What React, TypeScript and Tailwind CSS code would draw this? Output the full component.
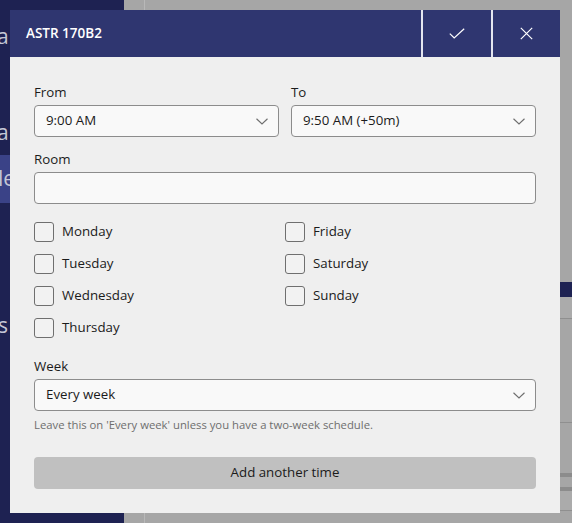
import React from "react";

const font = { fontFamily: '"Open Sans", "Noto Sans", sans-serif' };

function Chevron() {
  return (
    <svg width="12" height="7" viewBox="0 0 12 7" fill="none">
      <path d="M0.5 0.75 L6 6 L11.5 0.75" stroke="#6e6e6e" strokeWidth="1.1" />
    </svg>
  );
}

function Select({ value }: { value: string }) {
  return (
    <div className="flex h-[32px] items-center justify-between rounded-[4px] border border-[#8c8c8c] bg-[#f9f9f9] pl-[11px] pr-[10px] text-[13.3px] text-[#1b1b1b]">
      <span>{value}</span>
      <Chevron />
    </div>
  );
}

function Check({ label }: { label: string }) {
  return (
    <div className="flex h-[32px] items-center">
      <div className="h-[20px] w-[20px] rounded-[3px] border border-[#6f6f6f] bg-[#f2f2f2]" />
      <span className="ml-[8px] text-[13.3px] text-[#1b1b1b]">{label}</span>
    </div>
  );
}

export default function App() {
  return (
    <div className="relative h-[523px] w-[572px] overflow-hidden bg-[#a6a6a6]" style={font}>
      {/* background app */}
      <div className="flex h-full">
        <div className="flex h-full w-[124px] flex-col bg-[#1e2252] text-[21px] leading-none text-[#c5c7d6]">
          <div className="h-[24px]" />
          <div className="flex h-[24px] items-center overflow-hidden">
            <span className="ml-[-3px]">a</span>
          </div>
          <div className="h-[72px]" />
          <div className="flex h-[24px] items-center overflow-hidden">
            <span className="ml-[-3px]">a</span>
          </div>
          <div className="h-[11px]" />
          <div className="flex h-[48px] items-center overflow-hidden bg-[#3a4287]">
            <span className="ml-[-2px] pb-[2px]">le</span>
          </div>
          <div className="h-[110px]" />
          <div className="flex h-[24px] items-center overflow-hidden">
            <span className="ml-[-2px]">s</span>
          </div>
        </div>
        <div className="flex h-full flex-1">
          <div className="w-[20px]" />
          <div className="h-full w-[1px] bg-[#b8b8b8]" />
          <div className="flex flex-1 flex-col">
            <div className="h-[282px]" />
            <div className="h-[15px] bg-[#1e2252]" />
            <div className="h-[21px] bg-[#ababab]" />
            <div className="h-[1px] bg-[#8f8f8f]" />
            <div className="h-[103px]" />
            <div className="h-[1px] bg-[#8f8f8f]" />
            <div className="h-[50px]" />
            <div className="h-[4px] bg-[#8c8c8c]" />
            <div className="h-[10px]" />
            <div className="h-[4px] bg-[#8c8c8c]" />
            <div className="h-[19px] bg-[#ababab]" />
            <div className="h-[1px] bg-[#8f8f8f]" />
          </div>
        </div>
      </div>

      {/* dialog */}
      <div className="absolute left-[10px] top-[10px] flex h-[503px] w-[550px] flex-col bg-[#efefef]">
        <div className="flex h-[47px] items-stretch bg-[#2f3670]">
          <div className="flex flex-1 items-center pl-[16px] text-[13.5px] font-semibold text-white">
            ASTR 170B2
          </div>
          <div className="flex w-[70px] items-center justify-center border-l-2 border-[#e4e6f0]">
            <svg width="16" height="11" viewBox="0 0 16 11" fill="none">
              <path d="M0.8 5.6 L5.2 10 L15.2 0.8" stroke="white" strokeWidth="1.2" />
            </svg>
          </div>
          <div className="flex w-[69px] items-center justify-center border-l-2 border-[#e4e6f0]">
            <svg width="13" height="13" viewBox="0 0 13 13" fill="none">
              <path d="M0.8 0.8 L12.2 12.2 M12.2 0.8 L0.8 12.2" stroke="white" strokeWidth="1.2" />
            </svg>
          </div>
        </div>

        <div className="flex flex-col px-[24px] pt-[26px] text-[#1b1b1b]">
          <div className="grid grid-cols-2 gap-x-[12px]">
            <div className="flex flex-col">
              <div className="h-[19px] text-[13.3px] leading-[19px]">From</div>
              <div className="mt-[3px]">
                <Select value="9:00 AM" />
              </div>
            </div>
            <div className="flex flex-col">
              <div className="h-[19px] text-[13.3px] leading-[19px]">To</div>
              <div className="mt-[3px]">
                <Select value="9:50 AM (+50m)" />
              </div>
            </div>
          </div>

          <div className="mt-[13px] h-[19px] text-[13.3px] leading-[19px]">Room</div>
          <div className="mt-[3px] h-[32px] rounded-[4px] border border-[#8c8c8c] bg-[#f9f9f9]" />

          <div className="mt-[12px] grid grid-cols-2">
            <div className="flex flex-col">
              <Check label="Monday" />
              <Check label="Tuesday" />
              <Check label="Wednesday" />
              <Check label="Thursday" />
            </div>
            <div className="flex flex-col">
              <Check label="Friday" />
              <Check label="Saturday" />
              <Check label="Sunday" />
            </div>
          </div>

          <div className="mt-[13px] h-[19px] text-[13.3px] leading-[19px]">Week</div>
          <div className="mt-[3px]">
            <Select value="Every week" />
          </div>
          <div className="mt-[6px] h-[16px] text-[11.3px] leading-[16px] text-[#6e6e6e]">
            Leave this on 'Every week' unless you have a two-week schedule.
          </div>

          <div className="mt-[24px] flex h-[32px] items-center justify-center rounded-[4px] bg-[#c0c0c0] text-[13.3px] text-[#1b1b1b]">
            Add another time
          </div>
        </div>
      </div>
    </div>
  );
}
